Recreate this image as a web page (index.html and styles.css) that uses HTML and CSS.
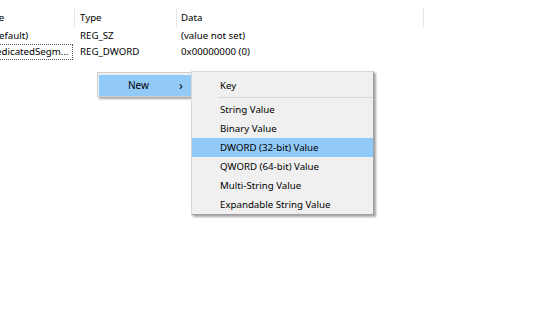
FILE: index.html
```html
<!DOCTYPE html>
<html lang="en">
<head>
  <meta charset="UTF-8">
  <title>Registry Editor - New value</title>
  <link rel="stylesheet" href="styles.css">
</head>
<body>
  <div class="list">
    <div class="row head">
      <div class="cell name">Name</div>
      <div class="cell type">Type</div>
      <div class="cell data">Data</div>
    </div>
    <div class="row">
      <div class="cell name"><span class="label">(Default)</span></div>
      <div class="cell type">REG_SZ</div>
      <div class="cell data">(value not set)</div>
    </div>
    <div class="row">
      <div class="cell name"><span class="label focus">DedicatedSegm...</span></div>
      <div class="cell type">REG_DWORD</div>
      <div class="cell data">0x00000000 (0)</div>
    </div>
  </div>

  <div class="menu parent">
    <div class="item active"><span class="text">New</span><span class="arrow">›</span></div>
  </div>

  <div class="menu sub">
    <div class="item">Key</div>
    <div class="sep"></div>
    <div class="item">String Value</div>
    <div class="item">Binary Value</div>
    <div class="item active">DWORD (32-bit) Value</div>
    <div class="item">QWORD (64-bit) Value</div>
    <div class="item">Multi-String Value</div>
    <div class="item">Expandable String Value</div>
  </div>
</body>
</html>
```
FILE: styles.css
```css
body {
  margin: 0;
  background-color: #fff;
  font-family: "Noto Sans", "Open Sans", sans-serif;
  font-size: 9.7px;
  color: #000;
  overflow: hidden;
}
.list {
  margin-left: -28px;
}
.row {
  display: flex;
  height: 16px;
  line-height: 16px;
  white-space: nowrap;
}
.row.head {
  height: 19px;
  line-height: 19px;
  padding-top: 8px;
  margin-bottom: 1px;
}
.cell {
  border-right: 1px solid transparent;
  box-sizing: border-box;
  overflow: hidden;
}
.head .cell {
  border-right-color: #e5e5e5;
}
.name {
  width: 103px;
  padding-left: 14px;
}
.head .name {
  padding-left: 5px;
}
.type {
  width: 102px;
  padding-left: 5px;
}
.data {
  width: 247px;
  padding-left: 4px;
}
.label {
  display: block;
  height: 16px;
  box-sizing: border-box;
  padding: 0 2px;
  border: 1px solid transparent;
  line-height: 14px;
  margin-right: 1px;
}
.label.focus {
  border: 1px dotted #555;
}
.menu {
  position: absolute;
  background-color: #f0f0f0;
  border: 1px solid #d0d0d0;
  box-shadow: 2px 2px 2px rgba(0,0,0,0.35);
}
.menu.parent {
  left: 97px;
  top: 72px;
  width: 92px;
  padding: 2px 0 0 1px;
}
.parent .item {
  display: flex;
  height: 21px;
  line-height: 21px;
  font-size: 10px;
}
.parent .text {
  flex: 1;
  padding-left: 29px;
}
.parent .arrow {
  width: 12px;
  font-size: 12px;
}
.menu.sub {
  left: 191px;
  top: 71px;
  width: 181px;
  padding: 4px 0 0;
  border-color: #d8d8d8 #a0a0a0 #a0a0a0 #d8d8d8;
}
.sub .item {
  height: 19px;
  line-height: 19px;
  padding-left: 28px;
}
.item.active {
  background-color: #91c9f7;
}
.sep {
  height: 5px;
  margin-left: 26px;
  box-sizing: border-box;
  border-top: 2px solid transparent;
  border-bottom: 2px solid transparent;
  background-color: #d7d7d7;
  background-clip: content-box;
}
```
